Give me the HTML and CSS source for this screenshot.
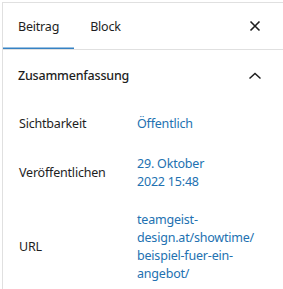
FILE: index.html
```html
<!DOCTYPE html>
<html lang="de">
<head>
  <meta charset="UTF-8">
  <title>Beitrag – Einstellungen</title>
  <link rel="stylesheet" href="styles.css">
</head>
<body>
  <aside class="sidebar">
    <div class="sidebar-header">
      <div class="tabs">
        <button class="tab is-active">Beitrag</button>
        <button class="tab">Block</button>
      </div>
      <button class="icon-btn" aria-label="Einstellungen schließen">
        <svg width="24" height="24" viewBox="0 0 24 24"><path d="M7.5 7.5l9 9M16.5 7.5l-9 9" stroke="currentColor" stroke-width="1.6" fill="none"/></svg>
      </button>
    </div>

    <section class="panel">
      <h2 class="panel-title">
        <span>Zusammenfassung</span>
        <svg class="chevron" width="24" height="24" viewBox="0 0 24 24"><path d="M6.5 14.5L12 9.5l5.5 5" stroke="currentColor" stroke-width="1.5" fill="none"/></svg>
      </h2>

      <div class="rows">
        <div class="row">
          <span class="label">Sichtbarkeit</span>
          <a class="value" href="#">Öffentlich</a>
        </div>
        <div class="row">
          <span class="label">Veröffentlichen</span>
          <a class="value" href="#">29. Oktober<br>2022 15:48</a>
        </div>
        <div class="row">
          <span class="label">URL</span>
          <a class="value" href="#">teamgeist-design.at/showtime/<wbr>beispiel-fuer-ein-angebot/</a>
        </div>
      </div>
    </section>
  </aside>
</body>
</html>
```

FILE: styles.css
```css
:root {
  --text: #1e1e1e;
  --border: #e0e0e0;
  --link: #2271b1;
  --accent: #3582c4;
  --font: 'Noto Sans', sans-serif;
}

body {
  margin: 0;
  background: #fff;
  font-family: var(--font);
  font-size: 12.5px;
  letter-spacing: -0.2px;
  line-height: 18px;
  color: var(--text);
}

.sidebar {
  margin: 2px 0 0 2px;
  border-top: 1px solid var(--border);
  border-left: 1px solid var(--border);
}

.sidebar-header {
  display: flex;
  align-items: center;
  justify-content: space-between;
  height: 46px;
  border-bottom: 1px solid var(--border);
}

.tabs {
  display: flex;
  height: 100%;
}

.tab {
  padding: 2px 15px 0 15px;
  border: none;
  background: none;
  font: inherit;
  letter-spacing: inherit;
  color: var(--text);
  cursor: pointer;
}

.tab + .tab {
  padding-left: 16px;
}

.tab.is-active {
  box-shadow: inset 0 -1.5px 0 var(--accent);
}

.icon-btn {
  display: flex;
  margin-right: 16px;
  padding: 0;
  border: none;
  background: none;
  color: var(--text);
}

.panel-title {
  display: flex;
  align-items: center;
  justify-content: space-between;
  height: 47px;
  margin: 0;
  padding: 2px 16px 0 15px;
  font-size: 12.5px;
  font-weight: 500;
}

.rows {
  display: flex;
  flex-direction: column;
  gap: 20px;
  padding: 14px 16px;
}

.row {
  display: flex;
  align-items: center;
  min-height: 22px;
}

.label {
  flex: 0 0 118px;
}

.value {
  max-width: 124px;
  color: var(--link);
  text-decoration: none;
}
```
